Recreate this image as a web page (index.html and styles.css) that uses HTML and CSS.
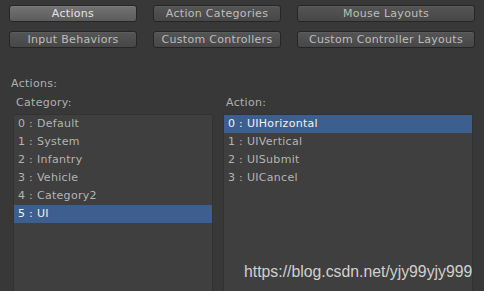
FILE: index.html
```html
<!DOCTYPE html>
<html>
<head>
<meta charset="utf-8">
<link rel="stylesheet" href="styles.css">
</head>
<body>
<div class="page">
  <div class="toolbar">
    <div class="btn-row">
      <div class="btn btn-a active">Actions</div>
      <div class="btn btn-a">Action Categories</div>
      <div class="btn btn-b">Mouse Layouts</div>
    </div>
    <div class="btn-row">
      <div class="btn btn-a">Input Behaviors</div>
      <div class="btn btn-a">Custom Controllers</div>
      <div class="btn btn-b">Custom Controller Layouts</div>
    </div>
  </div>
  <div class="section-label">Actions:</div>
  <div class="columns">
    <div class="col col-left">
      <div class="col-label">Category:</div>
      <div class="list">
        <div class="item">0 : Default</div>
        <div class="item">1 : System</div>
        <div class="item">2 : Infantry</div>
        <div class="item">3 : Vehicle</div>
        <div class="item">4 : Category2</div>
        <div class="item selected">5 : UI</div>
      </div>
    </div>
    <div class="col col-right">
      <div class="col-label">Action:</div>
      <div class="list">
        <div class="item selected">0 : UIHorizontal</div>
        <div class="item">1 : UIVertical</div>
        <div class="item">2 : UISubmit</div>
        <div class="item">3 : UICancel</div>
        <div class="watermark">https://blog.csdn.net/yjy99yjy999</div>
      </div>
    </div>
  </div>
</div>
</body>
</html>
```
FILE: styles.css
```css
html, body {
  margin: 0;
  padding: 0;
  background: #383838;
  overflow: hidden;
}
body {
  width: 484px;
  height: 291px;
  font-family: "DejaVu Sans", Verdana, sans-serif;
  font-size: 11px;
  letter-spacing: 0.3px;
  color: #b0b0b0;
}
.page {
  display: flex;
  flex-direction: column;
}
.toolbar {
  display: flex;
  flex-direction: column;
  gap: 9px;
  padding: 5px 0 0 9px;
}
.btn-row {
  display: flex;
  gap: 16px;
}
.btn {
  box-sizing: border-box;
  height: 17px;
  line-height: 15px;
  text-align: center;
  border: 1px solid #262626;
  border-radius: 3px;
  background: linear-gradient(#555555, #474747);
  box-shadow: inset 0 1px 0 #5c5c5c;
  color: #bdbdbd;
}
.btn-a { width: 128px; }
.btn-b { width: 178px; }
.btn.active {
  background: linear-gradient(#737373, #5c5c5c);
  box-shadow: inset 0 1px 0 #7a7a7a;
  color: #e4e4e4;
}
.section-label {
  margin: 29px 0 0 11px;
  height: 14px;
  line-height: 14px;
}
.columns {
  display: flex;
  gap: 10px;
  padding-left: 13px;
  margin-top: 5px;
}
.col-label {
  padding-left: 3px;
  height: 18px;
  line-height: 14px;
}
.col-left { width: 200px; }
.col-right { width: 250px; }
.list {
  position: relative;
  box-sizing: border-box;
  height: 190px;
  background: #3f3f3f;
  border: 1px solid #333333;
  border-bottom: none;
}
.item {
  height: 18px;
  line-height: 18px;
  padding-left: 4px;
  color: #b4b4b4;
}
.item.selected {
  background: #3d5f90;
  color: #f0f0f0;
}
.watermark {
  position: absolute;
  left: 20px;
  top: 148px;
  font-family: "Liberation Sans", Arial, sans-serif;
  font-size: 15.8px;
  letter-spacing: 0;
  color: rgba(235, 235, 235, 0.85);
  white-space: nowrap;
}
```
